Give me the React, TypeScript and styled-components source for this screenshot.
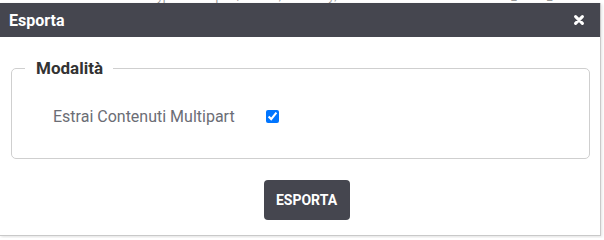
import React from "react";
import styled, { createGlobalStyle } from "styled-components";

const Global = createGlobalStyle`
  html, body { margin: 0; padding: 0; background: #ffffff; }
  body { font-family: Roboto, "Liberation Sans", Arial, sans-serif; }
`;

const Page = styled.div`
  width: 604px;
  height: 238px;
  overflow: hidden;
  background: #ffffff;
`;

const BackStrip = styled.div`
  height: 3px;
  overflow: hidden;
  display: flex;
  align-items: flex-end;
  padding-left: 105px;
  font-size: 12px;
  line-height: 13px;
  color: #9a9a9a;
  white-space: nowrap;
`;

const Modal = styled.div`
  width: 600px;
  height: 232px;
  background: #ffffff;
  border-right: 1px solid #c9c9c9;
  border-bottom: 1px solid #c9c9c9;
  box-shadow: 1px 1px 3px rgba(0, 0, 0, 0.12);
  display: flex;
  flex-direction: column;
`;

const Header = styled.div`
  height: 34px;
  background: #45464f;
  display: flex;
  align-items: center;
  justify-content: space-between;
  padding: 0 16px 0 9px;
`;

const Title = styled.span`
  color: #ffffff;
  font-size: 16px;
  font-weight: 700;
`;

const Close = styled.button`
  border: 0;
  background: transparent;
  padding: 0;
  display: flex;
  cursor: pointer;
`;

const Fieldset = styled.fieldset`
  margin: 21px 10px 0 11px;
  padding: 28px 13px 32px 13px;
  border: 1px solid #cfcfcf;
  border-radius: 5px;
  min-width: 0;
`;

const Legend = styled.legend`
  padding: 0 10px 0 11px;
  font-size: 17px;
  line-height: 20px;
  font-weight: 700;
  color: #333333;
`;

const Row = styled.div`
  display: grid;
  grid-template-columns: 213px auto;
  align-items: center;
  height: 20px;
  padding-left: 28px;
`;

const Label = styled.label`
  font-size: 16px;
  color: #6b6d75;
`;

const Check = styled.input`
  width: 13px;
  height: 13px;
  margin: 0;
  accent-color: #0075ff;
`;

const Footer = styled.div`
  display: flex;
  justify-content: center;
  padding: 21px 0 0 13px;
`;

const Button = styled.button`
  width: 86px;
  height: 40px;
  border: 0;
  border-radius: 4px;
  background: #45464f;
  color: #ffffff;
  font-family: Roboto, "Liberation Sans", Arial, sans-serif;
  font-size: 14px;
  font-weight: 700;
  cursor: pointer;
`;

export default function App() {
  return (
    <>
      <Global />
      <Page>
        <BackStrip>
          Content-Type = multipart/related; boundary; -- Ex: WWW-Authenticate: Bearer_realm_test
        </BackStrip>
        <Modal>
          <Header>
            <Title>Esporta</Title>
            <Close aria-label="Chiudi">
              <svg width="10" height="10" viewBox="0 0 10 10">
                <path
                  d="M1.6 1.6 L8.4 8.4 M8.4 1.6 L1.6 8.4"
                  stroke="#ffffff"
                  strokeWidth="3"
                  strokeLinecap="round"
                />
              </svg>
            </Close>
          </Header>
          <Fieldset>
            <Legend>Modalità</Legend>
            <Row>
              <Label htmlFor="multipart">Estrai Contenuti Multipart</Label>
              <Check id="multipart" type="checkbox" defaultChecked />
            </Row>
          </Fieldset>
          <Footer>
            <Button>ESPORTA</Button>
          </Footer>
        </Modal>
      </Page>
    </>
  );
}
